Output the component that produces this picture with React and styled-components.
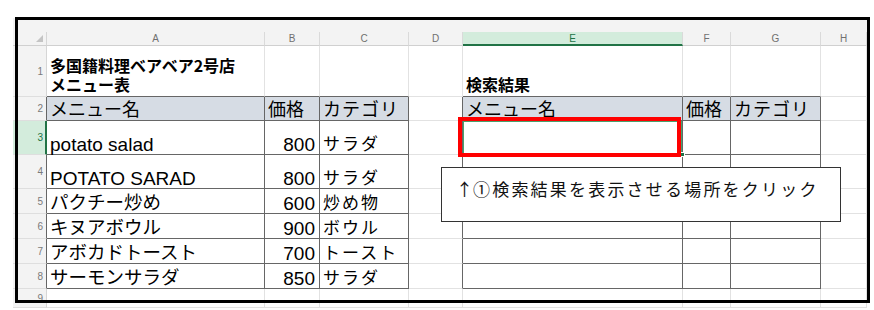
import React from 'react';
import styled, { createGlobalStyle } from 'styled-components';

const GRID = '#e2e2e2';
const LINE = '#666666';
const HEAD_BG = '#d6dce4';
const SEL_GREEN = '#217346';
const SEL_BG = '#d3ecdc';

const COLS = [34, 218, 55, 89, 54, 220, 48, 90, 46];
const ROWS = [14, 14, 51, 24, 34, 34, 25, 25, 25, 25, 19];
const LETTERS = ['A', 'B', 'C', 'D', 'E', 'F', 'G', 'H'];

const GlobalStyle = createGlobalStyle`
  html, body {
    margin: 0;
    padding: 0;
    background: #ffffff;
  }
  body {
    font-family: "Noto Sans CJK JP", "Liberation Sans", sans-serif;
    color: #000;
  }
`;

const Stage = styled.div`
  position: relative;
  width: 874px;
  height: 310px;
  box-sizing: border-box;
  padding: 18px 0 0 13px;
  overflow: hidden;
  background: #fff;
`;

const Sheet = styled.div`
  position: relative;
  display: grid;
  grid-template-columns: ${COLS.map((c) => `${c}px`).join(' ')};
  grid-template-rows: ${ROWS.map((r) => `${r}px`).join(' ')};
  width: ${COLS.reduce((a, b) => a + b, 0)}px;
`;

const TopBand = styled.div`
  grid-column: 1 / -1;
  background: #f3f3f3;
`;

const Corner = styled.div`
  position: relative;
  box-sizing: border-box;
  background: #f3f3f3;
  border-right: 1px solid #d6d6d6;
  border-bottom: 1px solid #d0d0d0;
  display: flex;
  align-items: flex-end;
  justify-content: flex-end;
  padding: 0 3px 3px 0;
`;

const CornerTriangle = styled.span`
  width: 0;
  height: 0;
  border-left: 7px solid transparent;
  border-bottom: 7px solid #c4c4c4;
`;

const ColHead = styled.div`
  box-sizing: border-box;
  background: ${(p) => (p.$sel ? SEL_BG : '#f3f3f3')};
  border-right: 1px solid #dadada;
  border-bottom: ${(p) => (p.$sel ? `2px solid ${SEL_GREEN}` : '1px solid #d0d0d0')};
  display: flex;
  align-items: center;
  justify-content: center;
  font-family: "Liberation Sans", Arial, sans-serif;
  font-size: 10px;
  color: ${(p) => (p.$sel ? SEL_GREEN : '#707070')};
`;

const RowHead = styled.div`
  box-sizing: border-box;
  background: ${(p) => (p.$sel ? SEL_BG : '#f3f3f3')};
  border-right: ${(p) =>
    p.$sel ? `2px solid ${SEL_GREEN}` : `1px solid ${p.$edge ? LINE : '#d6d6d6'}`};
  border-bottom: 1px solid #dedede;
  display: flex;
  align-items: center;
  justify-content: flex-end;
  padding-right: ${(p) => (p.$sel ? '2px' : '3px')};
  font-family: "Liberation Sans", Arial, sans-serif;
  font-size: 10px;
  color: ${(p) => (p.$sel ? SEL_GREEN : '#7a7a7a')};
`;

const Cell = styled.div`
  position: relative;
  box-sizing: border-box;
  display: flex;
  align-items: flex-end;
  justify-content: ${(p) => (p.$right ? 'flex-end' : 'flex-start')};
  padding: 0 ${(p) => (p.$right ? '4px' : '0')} ${(p) => p.$pb || 0}px
    ${(p) => (p.$right ? '0' : '3px')};
  background: ${(p) => (p.$head ? HEAD_BG : '#ffffff')};
  border-right: 1px solid ${(p) => (p.$r ? LINE : GRID)};
  border-bottom: 1px solid ${(p) => (p.$b ? LINE : GRID)};
  box-shadow: ${(p) => (p.$sel ? `inset 0 0 0 1px #4aa06c` : 'none')};
  font-size: 18px;
  line-height: 1.25;
  white-space: nowrap;
  color: #000;
`;

const FillHandle = styled.span`
  position: absolute;
  right: -3px;
  bottom: -3px;
  width: 5px;
  height: 5px;
  background: ${SEL_GREEN};
  border: 1px solid #ffffff;
  box-sizing: border-box;
  z-index: 2;
`;

const Title = styled.span`
  font-weight: 700;
  font-size: 16px;
  line-height: 19px;
  white-space: pre-line;
`;

const Latin = styled.span`
  font-family: "Liberation Sans", Arial, "Noto Sans CJK JP", sans-serif;
  font-size: 19px;
  line-height: 19px;
`;

const Cat = styled.span`
  font-size: 17px;
  letter-spacing: 2px;
  line-height: 22px;
`;

const Head = styled.span`
  font-size: ${(p) => p.$size || 18}px;
  line-height: 24px;
  letter-spacing: ${(p) => p.$ls || 0}px;
`;

const Frame = styled.div`
  position: absolute;
  left: 15px;
  top: 17px;
  width: 855px;
  height: 286px;
  box-sizing: border-box;
  border: 3px solid #000000;
  pointer-events: none;
  z-index: 5;
`;

const RedMark = styled.div`
  position: absolute;
  left: 445px;
  top: 99px;
  width: 223px;
  height: 40px;
  box-sizing: border-box;
  border: 4px solid #ff0000;
  z-index: 3;
`;

const Callout = styled.div`
  position: absolute;
  left: 428px;
  top: 149px;
  width: 400px;
  height: 55px;
  box-sizing: border-box;
  border: 1px solid #333333;
  background: #ffffff;
  padding: 9px 0 0 14px;
  font-size: 17px;
  line-height: 24px;
  letter-spacing: 2.2px;
  color: #111111;
  white-space: nowrap;
  z-index: 4;
`;

const Arrow = styled.span`
  letter-spacing: 0;
`;

const MENU = [
  { name: 'potato salad', price: 800, cat: 'サラダ', latin: true },
  { name: 'POTATO SARAD', price: 800, cat: 'サラダ', latin: true },
  { name: 'パクチー炒め', price: 600, cat: '炒め物' },
  { name: 'キヌアボウル', price: 900, cat: 'ボウル' },
  { name: 'アボカドトースト', price: 700, cat: 'トースト' },
  { name: 'サーモンサラダ', price: 850, cat: 'サラダ' },
];

const inTableRow = (n) => n >= 2 && n <= 8;

function cellContent(n, c) {
  if (n === 1 && c === 1)
    return <Title>{'多国籍料理ベアベア2号店\nメニュー表'}</Title>;
  if (n === 1 && c === 5) return <Title>検索結果</Title>;
  if (n === 2 && (c === 1 || c === 5)) return <Head>メニュー名</Head>;
  if (n === 2 && (c === 2 || c === 6)) return <Head>価格</Head>;
  if (n === 2 && (c === 3 || c === 7)) return <Head $ls={1}>カテゴリ</Head>;
  if (n >= 3 && n <= 8) {
    const item = MENU[n - 3];
    if (c === 1)
      return item.latin ? (
        <Latin>{item.name}</Latin>
      ) : (
        <Head $size={18.5}>{item.name}</Head>
      );
    if (c === 2) return <Latin>{item.price}</Latin>;
    if (c === 3) return <Cat>{item.cat}</Cat>;
  }
  return null;
}

function SheetRow({ n }) {
  const cells = [];
  for (let c = 1; c <= 8; c += 1) {
    const inLeft = c >= 1 && c <= 3 && inTableRow(n);
    const inRight = c >= 5 && c <= 7 && inTableRow(n);
    const inTable = inLeft || inRight;
    const r = inTable || (c === 4 && inTableRow(n));
    const b = inTable || (n === 1 && ((c >= 1 && c <= 3) || (c >= 5 && c <= 7)));
    const head = n === 2 && inTable;
    const sel = n === 3 && c === 5;
    cells.push(
      <Cell
        key={c}
        $r={r}
        $b={b}
        $head={head}
        $sel={sel}
        $right={c === 2 && n >= 3}
        $pb={n === 1 ? 2 : 0}
      >
        {cellContent(n, c)}
        {sel && <FillHandle />}
      </Cell>
    );
  }
  return (
    <>
      <RowHead $sel={n === 3} $edge={inTableRow(n)}>
        {n}
      </RowHead>
      {cells}
    </>
  );
}

export default function App() {
  const rows = [1, 2, 3, 4, 5, 6, 7, 8, 9];
  return (
    <>
      <GlobalStyle />
      <Stage>
        <Sheet>
          <TopBand />
          <Corner>
            <CornerTriangle />
          </Corner>
          {LETTERS.map((l) => (
            <ColHead key={l} $sel={l === 'E'}>
              {l}
            </ColHead>
          ))}
          {rows.map((n) => (
            <SheetRow key={n} n={n} />
          ))}
          <RedMark />
          <Callout>
            <Arrow>↑</Arrow>①検索結果を表示させる場所をクリック
          </Callout>
        </Sheet>
        <Frame />
      </Stage>
    </>
  );
}
